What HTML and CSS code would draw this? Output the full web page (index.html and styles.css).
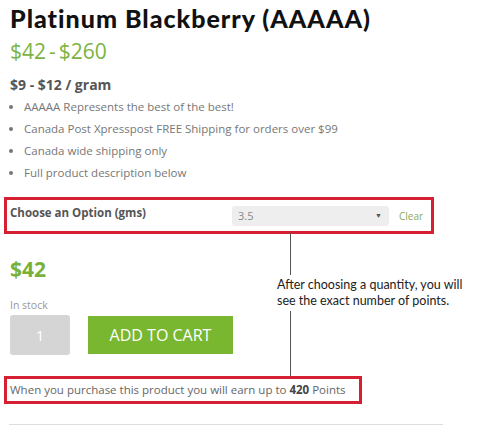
FILE: index.html
```html
<!DOCTYPE html>
<html lang="en">
<head>
    <meta charset="UTF-8">
    <meta name="viewport" content="width=device-width, initial-scale=1.0">
    <title>Platinum Blackberry (AAAAA)</title>
    <link rel="stylesheet" href="styles.css">
</head>
<body>
    <div class="product">
        <h1 class="title">Platinum Blackberry (AAAAA)</h1>
        <p class="price-range">$42<span class="dash">-</span>$260</p>
        <h3 class="unit-price">$9 - $12 / gram</h3>
        <ul class="highlights">
            <li>AAAAA Represents the best of the best!</li>
            <li>Canada Post Xpresspost FREE Shipping for orders over $99</li>
            <li>Canada wide shipping only</li>
            <li>Full product description below</li>
        </ul>

        <div class="callout option-row">
            <label class="option-label">Choose an Option (gms)</label>
            <div class="select">
                <span>3.5</span>
                <span class="arrow">&#9660;</span>
            </div>
            <a class="clear">Clear</a>
        </div>

        <div class="price">$42</div>
        <div class="stock">In stock</div>
        <div class="cart-row">
            <div class="qty">1</div>
            <button class="add-btn">ADD TO CART</button>
        </div>

        <div class="callout points">
            When you purchase this product you will earn up to <b>420</b> Points
        </div>
        <hr class="divider">

        <!-- annotation drawn over the page -->
        <div class="note-line top"></div>
        <div class="note">After choosing a quantity, you will<br>see the exact number of points.</div>
        <div class="note-line bottom"></div>
    </div>
</body>
</html>
```

FILE: styles.css
```css
body {
    margin: 0;
    background-color: #fff;
    font-family: "Open Sans", Arial, sans-serif;
    color: #666;
}
.product {
    position: relative;
    padding: 3px 10px 0 10px;
}
.title {
    margin: 0;
    font-family: "Lato", "DejaVu Sans", sans-serif;
    font-weight: 900;
    font-size: 25px;
    line-height: 30px;
    color: #111;
    letter-spacing: 1px;
}
.price-range {
    margin: 4px 0 0 0;
    font-size: 21px;
    line-height: 28px;
    color: #7cb342;
}
.dash {
    margin: 0 3px;
}
.unit-price {
    margin: 11px 0 0 0;
    font-size: 14px;
    line-height: 18px;
    color: #555;
}
.highlights {
    margin: 2px 0 0 0;
    padding: 0 0 0 14px;
    font-size: 11.5px;
    line-height: 22px;
    color: #777;
}
.callout {
    border: 3px solid #d42032;
    margin-left: -6px;
}
.option-row {
    display: flex;
    align-items: center;
    width: 421px;
    height: 31px;
    margin-top: 13px;
    padding-left: 3px;
}
.option-label {
    font-size: 11.5px;
    font-weight: bold;
    color: #555;
    width: 222px;
    margin-top: -6px;
}
.select {
    display: flex;
    justify-content: space-between;
    align-items: center;
    width: 144px;
    height: 20px;
    padding: 0 7px 0 6px;
    background-color: #eee;
    border-radius: 3px;
    font-size: 11px;
    color: #888;
}
.arrow {
    font-size: 7px;
    color: #555;
}
.clear {
    margin-left: 10px;
    font-size: 10px;
    color: #8aa860;
}
.price {
    margin-top: 22px;
    font-size: 21px;
    font-weight: bold;
    line-height: 26px;
    color: #78b13a;
}
.stock {
    margin-top: 16px;
    font-size: 10.5px;
    line-height: 14px;
    color: #999;
}
.cart-row {
    display: flex;
    align-items: center;
    margin-top: 3px;
}
.qty {
    width: 60px;
    height: 40px;
    line-height: 40px;
    text-align: center;
    background-color: #d5d5d5;
    border-radius: 3px;
    color: #fff;
    font-size: 15px;
}
.add-btn {
    margin-left: 18px;
    width: 145px;
    height: 38px;
    background-color: #78b72f;
    border: none;
    color: #fff;
    font-family: "Open Sans", Arial, sans-serif;
    font-size: 16px;
}
.points {
    margin-top: 21px;
    width: 349px;
    height: 22px;
    line-height: 22px;
    padding-left: 3px;
    font-size: 11.5px;
    color: #666;
}
.points b {
    color: #444;
}
.divider {
    margin: 20px 51px 0 -1px;
    border: none;
    border-top: 1px solid #ddd;
}
.note-line {
    position: absolute;
    left: 290px;
    width: 1px;
    background-color: #555;
}
.note-line.top {
    top: 233px;
    height: 42px;
}
.note-line.bottom {
    top: 311px;
    height: 65px;
}
.note {
    position: absolute;
    left: 277px;
    top: 277px;
    font-family: "Lato", "Liberation Sans", sans-serif;
    font-size: 12.5px;
    line-height: 16px;
    color: #222;
}
```
